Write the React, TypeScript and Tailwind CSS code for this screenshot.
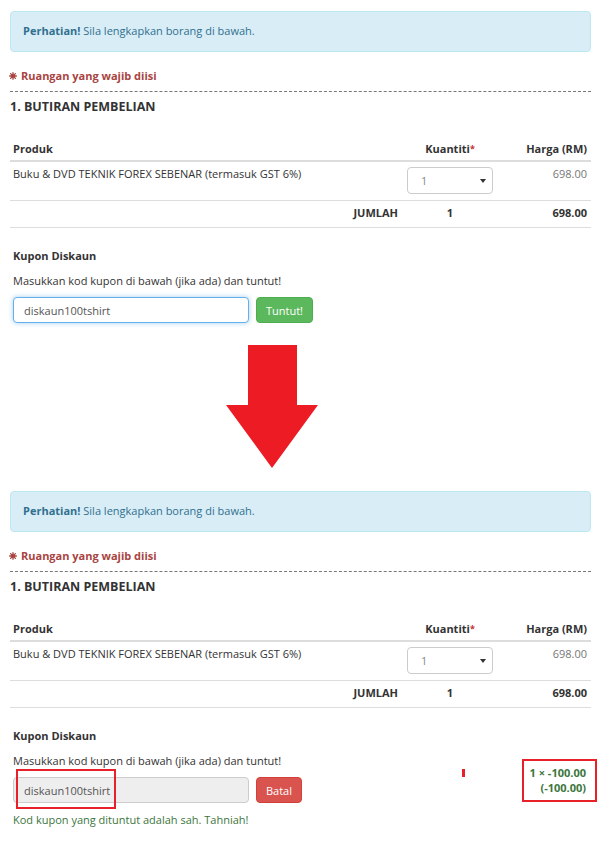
import React from "react";

function Burst({ className }: { className?: string }) {
  return (
    <svg viewBox="0 0 10 10" className={className}>
      <g stroke="currentColor" strokeWidth="1.6" strokeLinecap="round">
        <line x1="5" y1="0.8" x2="5" y2="9.2" />
        <line x1="0.8" y1="5" x2="9.2" y2="5" />
        <line x1="2" y1="2" x2="8" y2="8" />
        <line x1="8" y1="2" x2="2" y2="8" />
      </g>
      <circle cx="5" cy="5" r="2.6" fill="currentColor" />
    </svg>
  );
}

function Section({ applied }: { applied: boolean }) {
  return (
    <div className="pl-[10px] pr-[9px] pt-[11px]">
      {/* Alert */}
      <div className="flex h-[41px] items-center rounded border border-[#bce8f1] bg-[#d9edf7] px-3 text-[11px] text-[#31708f]">
        <span className="font-bold">Perhatian!</span>&nbsp;Sila lengkapkan borang di bawah.
      </div>

      <div className="mt-[15px] -ml-[1px] flex items-center gap-[4px] text-[11px] font-bold leading-[17px] text-[#a94442]">
        <Burst className="h-[8px] w-[8px]" />
        <span>Ruangan yang wajib diisi</span>
      </div>
      <div className="mt-[7px] border-t border-dashed border-[#777]" />
      <h2 className="mt-[5px] text-[12.5px] font-bold leading-[20px] text-[#333]">1. BUTIRAN PEMBELIAN</h2>

      {/* Table */}
      <div className="mt-[19px] grid grid-cols-[1fr_94px_94px] text-[11px] leading-[17px] text-[#333]">
        <div className="border-b-2 border-[#ddd] pb-[3px] pl-[3px] pt-[4px] font-bold">Produk</div>
        <div className="border-b-2 border-[#ddd] pb-[3px] pt-[4px] text-center font-bold">
          Kuantiti<sup className="relative -top-[1px] text-[9px] text-[#c9302c]">*</sup>
        </div>
        <div className="border-b-2 border-[#ddd] pb-[3px] pr-[4px] pt-[4px] text-right font-bold">Harga (RM)</div>

        <div className="border-b border-[#ddd] pb-[7px] pl-[3px] pt-[4px] leading-[16px]">
          Buku &amp; DVD TEKNIK FOREX SEBENAR (termasuk GST 6%)
        </div>
        <div className="flex justify-center border-b border-[#ddd] pb-[6px] pt-[5px]">
          <div className="flex h-[27px] w-[86px] items-center justify-between rounded border border-[#ccc] bg-white pl-[13px] pr-[6px] text-[#888]">
            <span>1</span>
            <svg viewBox="0 0 6 4" className="h-[4px] w-[6px] text-[#333]">
              <polygon points="0,0 6,0 3,4" fill="currentColor" />
            </svg>
          </div>
        </div>
        <div className="border-b border-[#ddd] pb-[7px] pr-[4px] pt-[4px] text-right leading-[16px] text-[#777]">698.00</div>

        <div className="border-b border-[#ddd] pb-[6px] pr-[5px] pt-[4px] text-right font-bold leading-[16px]">JUMLAH</div>
        <div className="border-b border-[#ddd] pb-[6px] pt-[4px] text-center font-bold leading-[16px]">1</div>
        <div className="border-b border-[#ddd] pb-[6px] pr-[4px] pt-[4px] text-right font-bold leading-[16px]">698.00</div>
      </div>

      {/* Coupon */}
      <div className="mt-[19px] flex items-start justify-between pl-[3px] text-[11px] leading-[17px] text-[#333]">
        <div>
          <div className="font-bold">Kupon Diskaun</div>
          <div className="mt-[8px]">Masukkan kod kupon di bawah (jika ada) dan tuntut!</div>
          <div className="mt-[8px] flex gap-[7px]">
            <div className="relative">
              {applied ? (
                <div className="flex h-[26px] w-[236px] items-center rounded border border-[#ccc] bg-[#eee] pl-[10px] text-[#555]">
                  diskaun100tshirt
                </div>
              ) : (
                <div className="flex h-[26px] w-[236px] items-center rounded border border-[#66afe9] bg-white pl-[10px] text-[#555] shadow-[0_0_5px_rgba(102,175,233,0.6)]">
                  diskaun100tshirt
                </div>
              )}
              {applied && (
                <div className="absolute -top-[8px] left-[3px] h-[40px] w-[100px] border-2 border-[#e8202a]" />
              )}
            </div>
            {applied ? (
              <button className="h-[26px] w-[46px] rounded border border-[#d43f3a] bg-[#d9534f] text-white">Batal</button>
            ) : (
              <button className="h-[26px] w-[57px] rounded border border-[#4cae4c] bg-[#5cb85c] text-white">Tuntut!</button>
            )}
          </div>
          {applied && (
            <div className="mt-[8px] text-[#3c763d]">Kod kupon yang dituntut adalah sah. Tahniah!</div>
          )}
        </div>

        {applied && (
          <div className="relative -mr-[6px] mt-[32px]">
            <div className="absolute left-[-60px] top-[10px] h-[8px] w-[3px] bg-[#e8202a]" />
            <div className="w-[75px] border-2 border-[#e8202a] pb-[5px] pr-[9px] pt-[4px] text-right font-bold leading-[15px] text-[#3c763d]">
              <div>1 × -100.00</div>
              <div>(-100.00)</div>
            </div>
          </div>
        )}
      </div>
    </div>
  );
}

export default function App() {
  return (
    <div className="min-h-[848px] w-[600px] bg-white font-['Open_Sans',sans-serif]">
      <Section applied={false} />
      <svg viewBox="0 0 600 157" className="block h-[157px] w-[600px]">
        <polygon points="248,22 297,22 297,82 318,82 272,145 226,82 248,82" fill="#ed1c24" />
      </svg>
      <Section applied={true} />
    </div>
  );
}
